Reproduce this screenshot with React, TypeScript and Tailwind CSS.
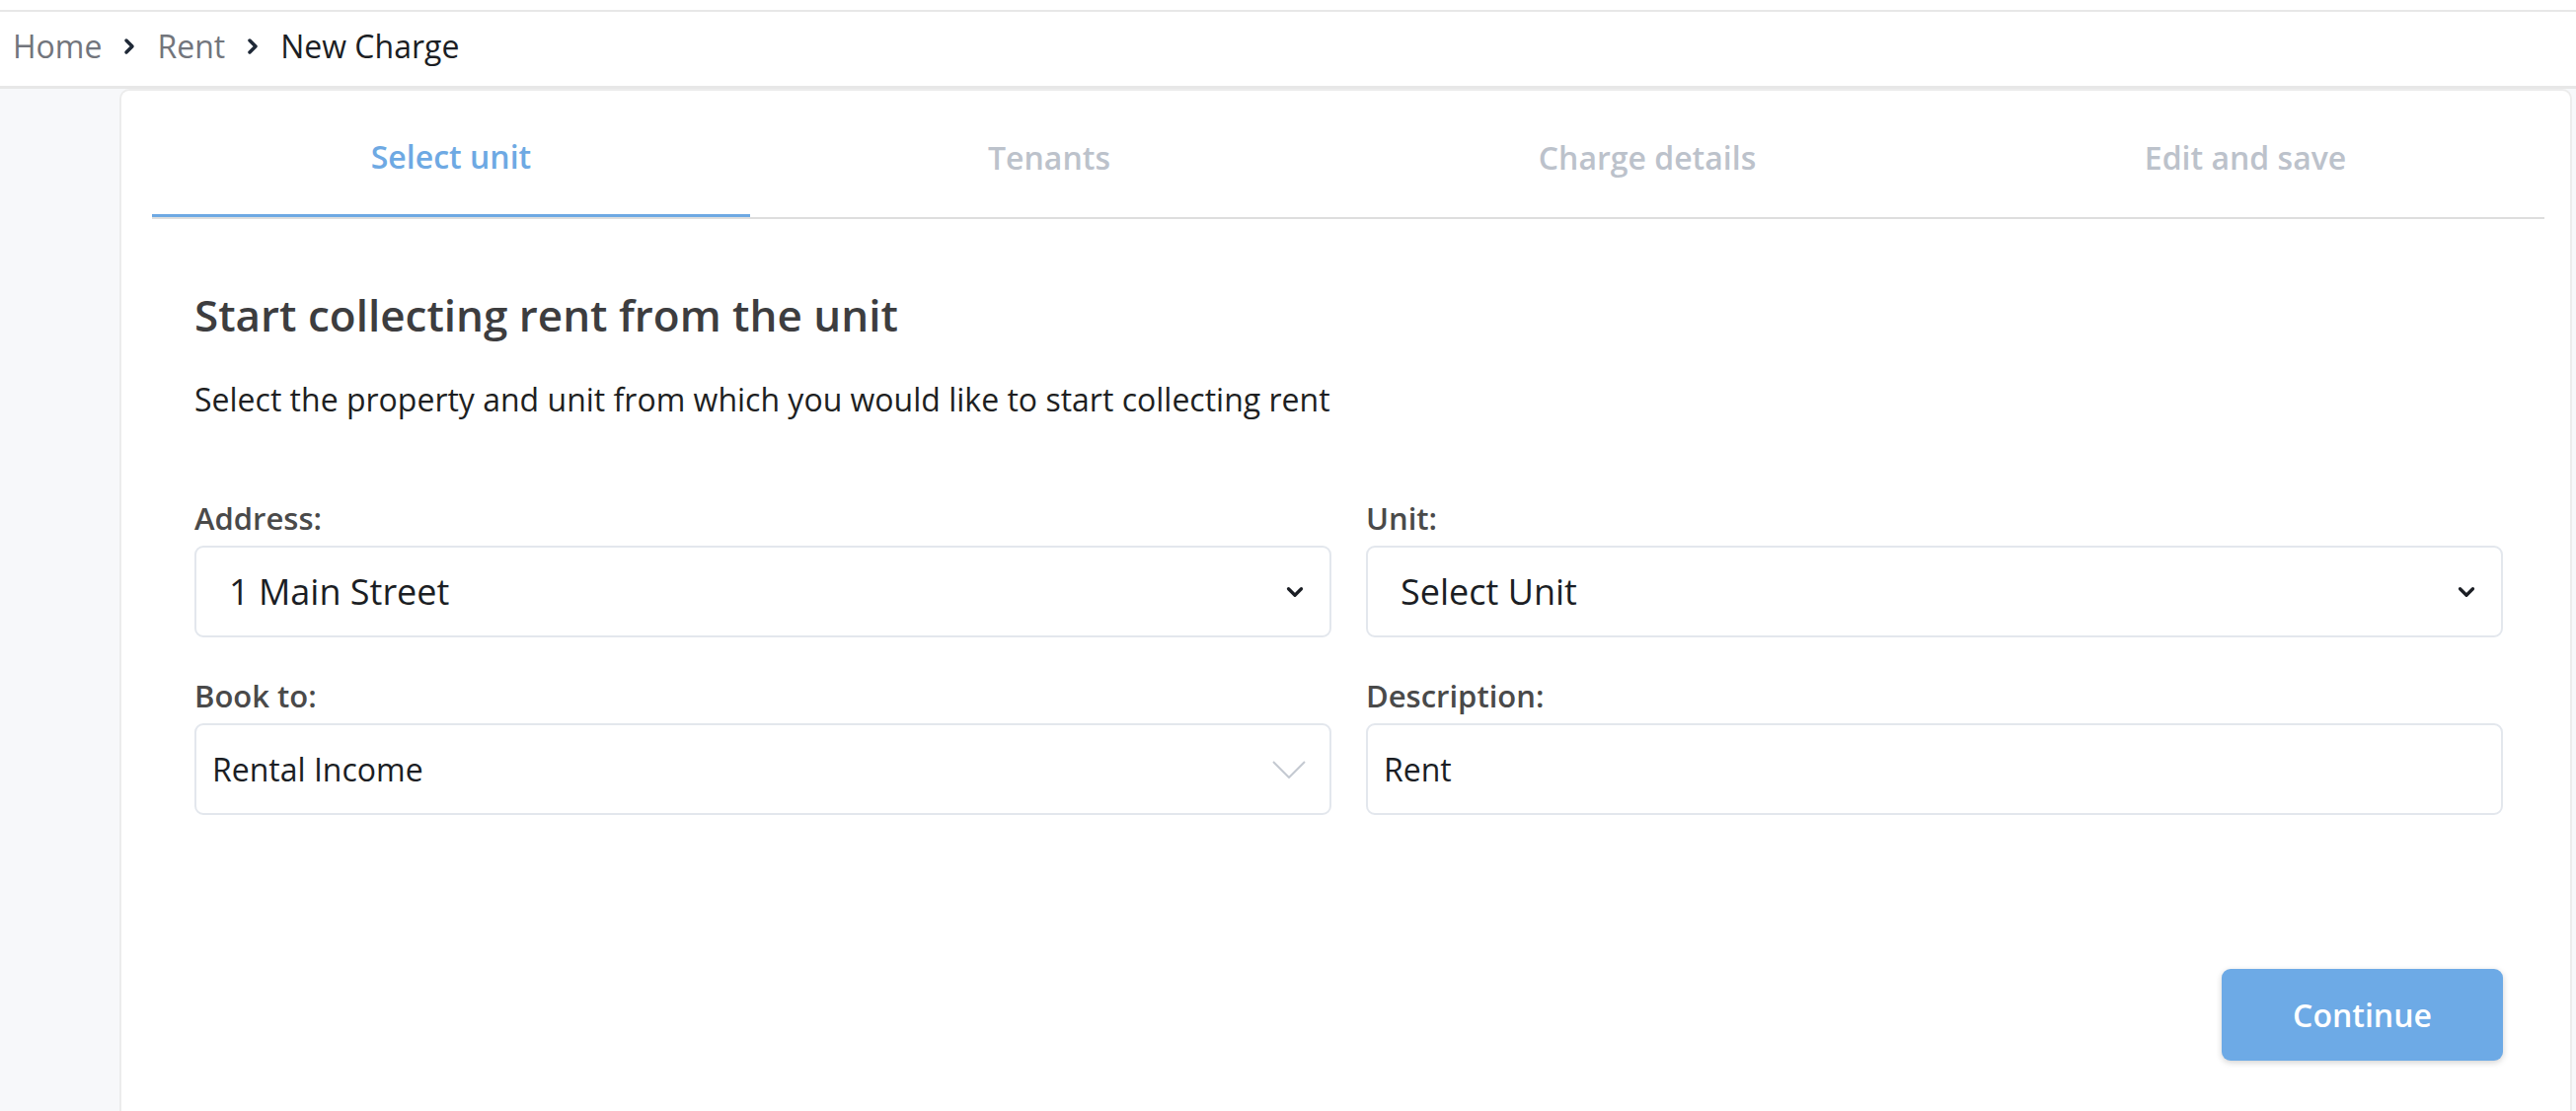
import React from "react";

const tabs = ["Select unit", "Tenants", "Charge details", "Edit and save"];

function Chevron({ className }: { className?: string }) {
  return (
    <svg viewBox="0 0 24 24" fill="none" stroke="currentColor" strokeLinecap="round" strokeLinejoin="round" className={className}>
      <path d="M6 9l6 6 6-6" />
    </svg>
  );
}

function Crumb() {
  return (
    <svg viewBox="0 0 24 24" fill="none" stroke="currentColor" strokeWidth={3.5} strokeLinecap="round" strokeLinejoin="round" className="w-[24px] h-[24px] text-[#1f2937]">
      <path d="M9 6l6 6-6 6" />
    </svg>
  );
}

export default function App() {
  return (
    <div className="min-h-screen bg-white font-['Open_Sans',sans-serif]">
      {/* top strip */}
      <div className="h-[10px] bg-white" />

      {/* breadcrumb */}
      <div className="h-[80px] border-t-2 border-b-[3px] border-[#e7e7e7] flex items-center pl-[13px] pb-[5px] gap-[16px] text-[32px]">
        <span className="text-[#72757c]">Home</span>
        <Crumb />
        <span className="text-[#72757c]">Rent</span>
        <Crumb />
        <span className="text-[#1b1e24] font-medium">New Charge</span>
      </div>

      <div className="flex bg-[#f7f8fa]">
        <div className="w-[121px] shrink-0" />

        {/* card */}
        <div className="flex-1 bg-white border-2 border-[#ececec] border-b-0 rounded-t-[10px] mr-[4px] min-h-[1036px] pl-[31px] pr-[26px]">
          {/* tabs */}
          <div className="grid grid-cols-4 border-b-2 border-[#dedede]">
            {tabs.map((t, i) => (
              <div
                key={t}
                className={
                  i === 0
                    ? "h-[128px] pt-[8px] flex items-center justify-center text-[32px] font-semibold text-[#6ea9e3] border-b-[3px] border-[#6ea9e3] -mb-[2px]"
                    : "h-[128px] pt-[8px] flex items-center justify-center text-[32px] font-semibold text-[#bcc2cb]"
                }
              >
                {t}
              </div>
            ))}
          </div>

          {/* form body */}
          <div className="pl-[43px] pr-[42px]">
            <h1 className="mt-[71px] text-[44px] leading-[52px] font-semibold text-[#3d3d3f]">
              Start collecting rent from the unit
            </h1>
            <p className="mt-[40px] text-[32px] leading-[40px] text-[#1e1f22]">
              Select the property and unit from which you would like to start collecting rent
            </p>

            <div className="mt-[82px] grid grid-cols-2 gap-x-[35px]">
              <div>
                <div className="text-[31px] leading-[36px] font-semibold text-[#4a4a4a]">Address:</div>
                <div className="mt-[10px] h-[93px] border-2 border-[#e3e7ed] rounded-[9px] flex items-center justify-between pl-[33px] pr-[22px]">
                  <span className="text-[36px] text-[#1b1e24]">1 Main Street</span>
                  <Chevron className="w-[26px] h-[26px] text-[#1b1e24] stroke-[3]" />
                </div>
              </div>
              <div>
                <div className="text-[31px] leading-[36px] font-semibold text-[#4a4a4a]">Unit:</div>
                <div className="mt-[10px] h-[93px] border-2 border-[#e3e7ed] rounded-[9px] flex items-center justify-between pl-[33px] pr-[22px]">
                  <span className="text-[36px] text-[#1b1e24]">Select Unit</span>
                  <Chevron className="w-[26px] h-[26px] text-[#1b1e24] stroke-[3]" />
                </div>
              </div>

              <div className="mt-[41px]">
                <div className="text-[31px] leading-[36px] font-semibold text-[#4a4a4a]">Book to:</div>
                <div className="mt-[10px] h-[93px] border-2 border-[#e3e7ed] rounded-[9px] flex items-center justify-between pl-[16px] pr-[24px]">
                  <span className="text-[32px] text-[#1b1e24]">Rental Income</span>
                  <svg viewBox="0 0 34 18" fill="none" stroke="#c4c9d1" strokeWidth={2} className="w-[34px] h-[18px]">
                    <path d="M1 1l16 16 16-16" />
                  </svg>
                </div>
              </div>
              <div className="mt-[41px]">
                <div className="text-[31px] leading-[36px] font-semibold text-[#4a4a4a]">Description:</div>
                <div className="mt-[10px] h-[93px] border-2 border-[#e3e7ed] rounded-[9px] flex items-center pl-[16px]">
                  <span className="text-[32px] text-[#1b1e24]">Rent</span>
                </div>
              </div>
            </div>

            <div className="mt-[156px] flex justify-end">
              <button className="w-[285px] h-[93px] rounded-[9px] bg-[#6daae6] text-white text-[32px] font-semibold shadow-[0_2px_6px_rgba(0,0,0,0.18)]">
                Continue
              </button>
            </div>
          </div>
        </div>
      </div>
    </div>
  );
}
